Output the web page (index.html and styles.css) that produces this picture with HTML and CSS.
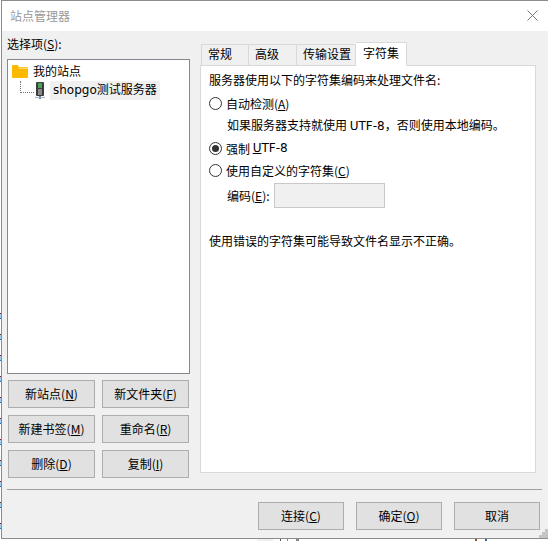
FILE: index.html
```html
<!DOCTYPE html>
<html lang="zh-CN">
<head>
    <meta charset="UTF-8">
    <title>站点管理器</title>
    <link rel="stylesheet" href="styles.css">
</head>
<body>
    <div class="desktop-left"></div>
    <div class="desktop-bottom"></div>
    <div class="window">
        <div class="titlebar">
            <span class="title">站点管理器</span>
            <svg class="close" width="11" height="11" viewBox="0 0 11 11"><path d="M.5.5l10 10M10.5.5l-10 10" stroke="#777" fill="none"/></svg>
        </div>
        <div class="content">
            <div class="main">
                <div class="left">
                    <div class="select-label">选择项(<u>S</u>):</div>
                    <div class="tree">
                        <div class="tree-root">
                            <svg class="folder" width="16" height="13" viewBox="0 0 16 13"><path d="M0 1A1 1 0 0 1 1 0h4.500l1.500 2h8a1 1 0 0 1 1 1v9a1 1 0 0 1-1 1H1a1 1 0 0 1-1-1z" fill="#fdb900"/><path d="M0 4h6l1.500-1.500H16V4z" fill="#fdd36a"/></svg>
                            <span class="root-name">我的站点</span>
                        </div>
                        <div class="tree-child">
                            <span class="dots"></span>
                            <svg class="server" width="10" height="17" viewBox="0 0 10 17"><rect x="1" y="0" width="8" height="14" rx="1" fill="#3c3c3c"/><rect x="3" y="1" width="4" height="5" fill="#4f9f55"/><rect x="3" y="7" width="4" height="6" fill="#8a8a8a"/><rect x="4" y="14" width="2" height="3" fill="#6f7f90"/><rect x="0" y="15" width="10" height="1" fill="#a4b4cc"/></svg>
                            <span class="site-name">shopgo测试服务器</span>
                        </div>
                    </div>
                    <div class="site-buttons">
                        <button class="btn">新站点(<u>N</u>)</button>
                        <button class="btn">新文件夹(<u>F</u>)</button>
                        <button class="btn">新建书签(<u>M</u>)</button>
                        <button class="btn">重命名(<u>R</u>)</button>
                        <button class="btn">删除(<u>D</u>)</button>
                        <button class="btn">复制(<u>I</u>)</button>
                    </div>
                </div>
                <div class="right">
                    <div class="tabs">
                        <div class="tab tab-general">常规</div>
                        <div class="tab tab-advanced">高级</div>
                        <div class="tab tab-transfer">传输设置</div>
                        <div class="tab tab-charset active">字符集</div>
                    </div>
                    <div class="tab-panel">
                        <p class="intro">服务器使用以下的字符集编码来处理文件名:</p>
                        <div class="radio-row first"><span class="radio"></span>自动检测(<u>A</u>)</div>
                        <p class="hint">如果服务器支持就使用 <span class="latin">UTF-8</span><span class="comma">，</span>否则使用本地编码。</p>
                        <div class="radio-row forced"><span class="radio checked"></span>强制 <span class="latin"><u>U</u>TF-8</span></div>
                        <div class="radio-row"><span class="radio"></span>使用自定义的字符集(<u>C</u>)</div>
                        <div class="encoding-row">
                            <label>编码(<u>E</u>):</label>
                            <div class="encoding-input"></div>
                        </div>
                        <p class="warning">使用错误的字符集可能导致文件名显示不正确。</p>
                    </div>
                </div>
            </div>
            <div class="footer">
                <button class="btn footer-btn">连接(<u>C</u>)</button>
                <button class="btn footer-btn">确定(<u>O</u>)</button>
                <button class="btn footer-btn">取消</button>
            </div>
            <svg class="grip" width="9" height="9" viewBox="0 0 9 9"><path d="M6 0h3v3H6zM3 3h3v3H3zM6 3h3v3H6zM0 6h3v3H0zM3 6h3v3H3zM6 6h3v3H6z" fill="#c4c4c4"/></svg>
        </div>
    </div>
</body>
</html>
```

FILE: styles.css
```css
html, body {
    margin: 0;
    padding: 0;
    height: 541px;
    overflow: hidden;
    background: #ffffff;
}
body {
    font-family: "Noto Sans CJK SC", "Liberation Sans", sans-serif;
    font-size: 12px;
    color: #000000;
}
u {
    text-underline-offset: 1px;
}
/* bits of the desktop showing round the window */
.desktop-left {
    position: absolute;
    left: 0;
    top: 313px;
    width: 1px;
    height: 216px;
    background: repeating-linear-gradient(#7a1f2f 0 1px, #9fd0ef 1px 5px, #2f6fb5 5px 6px, #ffffff 6px 21px);
}
.desktop-bottom {
    position: absolute;
    left: 257px;
    top: 539px;
    width: 232px;
    height: 2px;
    background: linear-gradient(to right, #f0f0f0 0 16px, #ffffff 16px 23px, #555555 23px 24px, #ffffff 24px 30px, #888888 30px 31px, #ffffff 31px 39px, #888888 39px 42px, #ffffff 42px 218px, #a05020 218px 220px, #ffffff 220px 228px, #3060a0 228px 230px, #ffffff 230px);
}
.window {
    box-sizing: border-box;
    margin-left: 1px;
    width: 547px;
    height: 539px;
    border: 1px solid #8c8c8c;
    border-right: 0;
    display: flex;
    flex-direction: column;
}
.titlebar {
    box-sizing: border-box;
    height: 30px;
    flex: none;
    background: #ffffff;
    display: flex;
    align-items: center;
    justify-content: space-between;
    padding: 0 10px 2px 8px;
}
.title {
    color: #999999;
}
.content {
    flex: 1;
    background: #f0f0f0;
    display: flex;
    flex-direction: column;
    position: relative;
}
.main {
    height: 458px;
    flex: none;
    display: flex;
    border-bottom: 1px solid #a0a0a0;
    margin: 0 6px 0 5px;
}
.left {
    width: 183px;
    flex: none;
    margin-right: 10px;
}
.select-label {
    height: 28px;
    line-height: 26px;
}
.tree {
    box-sizing: border-box;
    height: 315px;
    background: #ffffff;
    border: 1px solid #828790;
    padding-top: 1px;
}
.tree-root {
    display: flex;
    align-items: center;
    height: 20px;
    padding-left: 4px;
    gap: 5px;
}
.root-name {
    margin-top: -2px;
}
.tree-child {
    display: flex;
    align-items: center;
    height: 19px;
    padding-left: 12px;
}
.dots {
    width: 14px;
    height: 12px;
    margin-top: -7px;
    border-left: 1px dotted #777;
    border-bottom: 1px dotted #777;
    box-sizing: border-box;
}
.server {
    margin: 0 5px 0 1px;
}
.site-name {
    background: #f0f0f0;
    padding: 0 3px;
    line-height: 19px;
    font-family: "DejaVu Sans", "Noto Sans CJK SC", sans-serif;
}
.site-buttons {
    display: grid;
    grid-template-columns: 87px 87px;
    grid-auto-rows: 28px;
    column-gap: 7px;
    row-gap: 7px;
    margin: 6px 0 0 1px;
}
.btn {
    font: inherit;
    color: inherit;
    background: #e1e1e1;
    border: 1px solid #adadad;
    padding: 0 0 2px;
}
.right {
    flex: 1;
    padding-top: 11px;
    min-width: 0;
}
.tabs {
    display: flex;
    height: 23px;
    align-items: flex-end;
    margin-left: 1px;
}
.tab {
    height: 21px;
    line-height: 18px;
    box-sizing: border-box;
    padding-left: 6px;
    background: #f0f0f0;
    border: 1px solid #d9d9d9;
    border-left-width: 0;
    border-bottom-width: 0;
}
.tab-general {
    width: 48px;
    border-left-width: 1px;
}
.tab-advanced {
    width: 48px;
}
.tab-transfer {
    width: 59px;
}
.tab-charset {
    width: 51px;
    padding-left: 7px;
}
.tab.active {
    height: 24px;
    margin-bottom: -1px;
    line-height: 20px;
    background: #ffffff;
    position: relative;
    z-index: 1;
}
.tab-panel {
    box-sizing: border-box;
    height: 408px;
    width: 336px;
    background: #ffffff;
    border: 1px solid #d9d9d9;
    padding: 4px 0 0 8px;
}
.tab-panel p {
    margin: 0;
}
.intro {
    line-height: 20px;
}
.radio-row {
    display: flex;
    align-items: center;
    height: 22px;
    white-space: pre;
}
.radio-row.first {
    margin-top: 2px;
}
.radio-row.forced {
    margin-top: 1px;
}
.latin {
    font-family: "DejaVu Sans", sans-serif;
}
.comma {
    font-family: "Noto Sans CJK TC", sans-serif;
}
.radio {
    box-sizing: border-box;
    width: 13px;
    height: 13px;
    border: 1px solid #333333;
    border-radius: 50%;
    margin-right: 4px;
    background: #ffffff;
    flex: none;
}
.radio.checked {
    padding: 2px;
    background: #333333 content-box;
}
.tab-panel .hint {
    margin-left: 18px;
    height: 22px;
    line-height: 22px;
}
.encoding-row {
    display: flex;
    align-items: center;
    margin: 2px 0 0 18px;
    gap: 4px;
}
.encoding-input {
    box-sizing: border-box;
    width: 111px;
    height: 25px;
    background: #f0f0f0;
    border: 1px solid #c8c8c8;
}
.tab-panel .warning {
    margin-top: 23px;
    line-height: 20px;
}
.footer {
    display: flex;
    justify-content: flex-end;
    gap: 12px;
    padding: 12px 8px 0 0;
}
.footer-btn {
    width: 86px;
    height: 28px;
}
.grip {
    position: absolute;
    right: 0;
    bottom: 0;
}
```
